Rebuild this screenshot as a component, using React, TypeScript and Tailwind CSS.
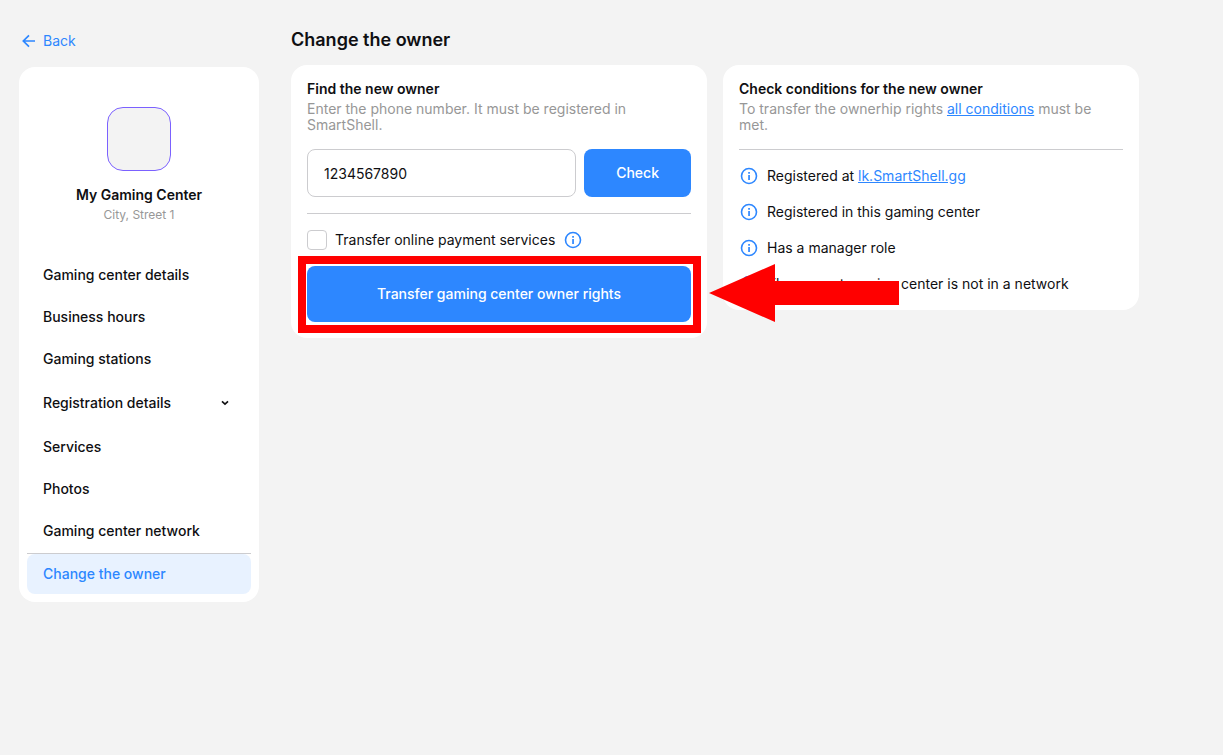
import { useState } from "react";

const ink = "text-[#0f0f12]";

function InfoIcon() {
  return (
    <svg className="size-5 shrink-0" viewBox="0 0 20 20" fill="none" aria-hidden="true">
      <circle cx="10" cy="10" r="7.5" stroke="#2d87ff" strokeWidth="1.6" />
      <path d="M9.2 6h1.7v1.7H9.2zM9.2 9h1.7v5H9.2z" fill="#2d87ff" />
    </svg>
  );
}

function NavLink({ label }: { label: string }) {
  return (
    <li>
      <a href="#" className="flex h-10 items-center rounded-lg px-4">
        {label}
      </a>
    </li>
  );
}

function Sidebar() {
  return (
    <aside className="w-60 shrink-0 pt-8">
      <a href="#" className="ml-[3px] flex h-[18px] w-fit items-center gap-2 text-sm text-[#2d87ff]">
        <svg className="h-4 w-[13px]" viewBox="0 0 13 16" fill="none" aria-hidden="true">
          <path d="M13 8H1.5M7 2.3L1.3 8L7 13.7" stroke="#2d87ff" strokeWidth="1.7" />
        </svg>
        Back
      </a>
      <div className="mt-[17px] rounded-2xl bg-white p-2 pt-10">
        <div className="flex flex-col items-center">
          <div className="size-16 rounded-2xl border border-[#7b61ff] bg-[#f3f3f3]" />
          <p className="mt-4 text-sm leading-4 font-semibold">My Gaming Center</p>
          <p className="mt-1 text-xs leading-4 text-[#979797]">City, Street 1</p>
        </div>
        <nav className="mt-8 text-sm font-medium">
          <ul className="flex flex-col gap-0.5">
            <NavLink label="Gaming center details" />
            <NavLink label="Business hours" />
            <NavLink label="Gaming stations" />
            <li>
              <button type="button" className="flex h-11 w-full items-center justify-between pr-[22px] pl-4">
                Registration details
                <svg className="size-2" viewBox="0 0 8 8" fill="none" aria-hidden="true">
                  <path d="M1 2.3L4 5.2L7 2.3" stroke="#0f0f12" strokeWidth="1.6" />
                </svg>
              </button>
            </li>
            <NavLink label="Services" />
            <NavLink label="Photos" />
            <NavLink label="Gaming center network" />
            <li className="border-t border-[#cccccf]">
              <a
                href="#"
                aria-current="page"
                className="flex h-10 items-center rounded-lg bg-[#e8f2ff] px-4 text-[#2d87ff]"
              >
                Change the owner
              </a>
            </li>
          </ul>
        </nav>
      </div>
    </aside>
  );
}

function OwnerForm() {
  const [phone, setPhone] = useState("1234567890");
  const [transfer, setTransfer] = useState(false);
  return (
    <form className="rounded-2xl bg-white p-4" onSubmit={(e) => e.preventDefault()}>
      <h2 className="text-sm leading-4 font-semibold">Find the new owner</h2>
      <p className="mt-1 text-sm leading-4 text-[#979797]">
        Enter the phone number. It must be registered in SmartShell.
      </p>
      <div className="mt-4 flex gap-2">
        <input
          type="tel"
          aria-label="Phone number"
          value={phone}
          onChange={(e) => setPhone(e.target.value)}
          className="h-12 min-w-0 flex-1 rounded-lg border border-[#cccccf] px-4 text-sm"
        />
        <button type="submit" className="h-12 rounded-lg bg-[#2d87ff] px-8 text-sm font-medium text-white">
          Check
        </button>
      </div>
      <hr className="my-4 border-[#cccccf]" />
      <div className="flex items-center gap-2">
        <label className="flex items-center gap-2 text-sm leading-5">
          <input
            type="checkbox"
            checked={transfer}
            onChange={(e) => setTransfer(e.target.checked)}
            className="size-5 appearance-none rounded-sm border border-[#cccccf] bg-white checked:bg-[#2d87ff]"
          />
          Transfer online payment services
        </label>
        <InfoIcon />
      </div>
      <div className="relative mt-4">
        <button type="button" className="h-14 w-full rounded-lg bg-[#2d87ff] text-sm font-medium text-white">
          Transfer gaming center owner rights
        </button>
        <div className="pointer-events-none absolute -top-2.5 -right-2.5 -bottom-[11px] -left-[9px] border-8 border-[#ff0000]" />
        <svg
          className="pointer-events-none absolute -top-0.5 left-full z-10 ml-[18px] h-[58px] w-[190px]"
          viewBox="0 0 190 58"
          aria-hidden="true"
        >
          <path d="M0 29L66 0V17H190V41H66V58Z" fill="#ff0000" />
        </svg>
      </div>
    </form>
  );
}

function Conditions() {
  const link = "text-[#2d87ff] underline";
  return (
    <section className="rounded-2xl bg-white p-4">
      <h2 className="text-sm leading-4 font-semibold">Check conditions for the new owner</h2>
      <p className="mt-1 text-sm leading-4 text-[#979797]">
        To transfer the ownerhip rights{" "}
        <a href="#" className={link}>
          all conditions
        </a>{" "}
        must be met.
      </p>
      <hr className="my-4 border-[#cccccf]" />
      <ul className="flex flex-col gap-4 text-sm leading-5">
        <li className="flex gap-2">
          <InfoIcon />
          <span>
            Registered at{" "}
            <a href="#" className={link}>
              lk.SmartShell.gg
            </a>
          </span>
        </li>
        <li className="flex gap-2">
          <InfoIcon />
          Registered in this gaming center
        </li>
        <li className="flex gap-2">
          <InfoIcon />
          Has a manager role
        </li>
        <li className="flex gap-2">
          <InfoIcon />
          The current gaming center is not in a network
        </li>
      </ul>
    </section>
  );
}

export default function App() {
  return (
    <div className={`min-h-screen bg-[#f3f3f3] font-['Inter',sans-serif] ${ink}`}>
      <div className="ml-[19px] flex max-w-[1120px] gap-8">
        <Sidebar />
        <main className="min-w-0 flex-1 pt-7">
          <h1 className="text-lg leading-6 font-semibold">Change the owner</h1>
          <div className="mt-[13px] grid grid-cols-2 items-start gap-4">
            <OwnerForm />
            <Conditions />
          </div>
        </main>
      </div>
    </div>
  );
}
